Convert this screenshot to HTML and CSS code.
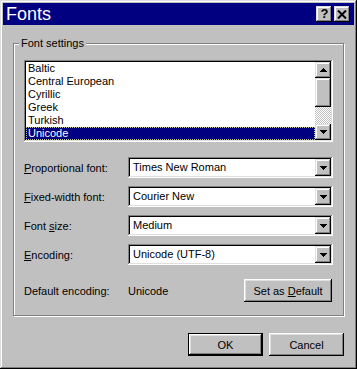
FILE: index.html
```html
<html>
  <head>
    <link rel="stylesheet" href="styles.css">
    <title>Fonts</title>
  </head>
  <body>
    <div class="window">
      <div class="titlebar">
        <span class="title">Fonts</span>
        <div class="caption-btns">
          <span class="caption-btn help">?</span>
          <span class="caption-btn">
            <svg width="10" height="9" viewBox="0 0 10 9">
              <path d="M1 0.5 L9 8.5 M9 0.5 L1 8.5" stroke="#000" stroke-width="2"/>
            </svg>
          </span>
        </div>
      </div>
      <div class="body">
        <fieldset class="group">
          <legend>Font settings</legend>
          <div class="listbox">
            <ul class="list">
              <li>Baltic</li>
              <li>Central European</li>
              <li>Cyrillic</li>
              <li>Greek</li>
              <li>Turkish</li>
              <li class="selected">Unicode</li>
            </ul>
            <div class="scrollbar">
              <span class="sb-btn">
                <svg width="7" height="4" viewBox="0 0 7 4" shape-rendering="crispEdges">
                  <rect x="3" y="0" width="1" height="1"/><rect x="2" y="1" width="3" height="1"/>
                  <rect x="1" y="2" width="5" height="1"/><rect x="0" y="3" width="7" height="1"/>
                </svg>
              </span>
              <span class="sb-thumb"></span>
              <span class="sb-track"></span>
              <span class="sb-btn">
                <svg width="7" height="4" viewBox="0 0 7 4" shape-rendering="crispEdges">
                  <rect x="0" y="0" width="7" height="1"/><rect x="1" y="1" width="5" height="1"/>
                  <rect x="2" y="2" width="3" height="1"/><rect x="3" y="3" width="1" height="1"/>
                </svg>
              </span>
            </div>
          </div>

          <div class="rows">
            <label><u>P</u>roportional font:</label>
            <div class="combo"><span class="combo-value">Times New Roman</span><span class="combo-btn"><svg width="7" height="4" viewBox="0 0 7 4" shape-rendering="crispEdges"><rect x="0" y="0" width="7" height="1"/><rect x="1" y="1" width="5" height="1"/><rect x="2" y="2" width="3" height="1"/><rect x="3" y="3" width="1" height="1"/></svg></span></div>

            <label><u>F</u>ixed-width font:</label>
            <div class="combo"><span class="combo-value">Courier New</span><span class="combo-btn"><svg width="7" height="4" viewBox="0 0 7 4" shape-rendering="crispEdges"><rect x="0" y="0" width="7" height="1"/><rect x="1" y="1" width="5" height="1"/><rect x="2" y="2" width="3" height="1"/><rect x="3" y="3" width="1" height="1"/></svg></span></div>

            <label>Font <u>s</u>ize:</label>
            <div class="combo"><span class="combo-value">Medium</span><span class="combo-btn"><svg width="7" height="4" viewBox="0 0 7 4" shape-rendering="crispEdges"><rect x="0" y="0" width="7" height="1"/><rect x="1" y="1" width="5" height="1"/><rect x="2" y="2" width="3" height="1"/><rect x="3" y="3" width="1" height="1"/></svg></span></div>

            <label><u>E</u>ncoding:</label>
            <div class="combo"><span class="combo-value">Unicode (UTF-8)</span><span class="combo-btn"><svg width="7" height="4" viewBox="0 0 7 4" shape-rendering="crispEdges"><rect x="0" y="0" width="7" height="1"/><rect x="1" y="1" width="5" height="1"/><rect x="2" y="2" width="3" height="1"/><rect x="3" y="3" width="1" height="1"/></svg></span></div>
          </div>

          <div class="default-row">
            <span class="default-label">Default encoding:</span>
            <span>Unicode</span>
            <button class="btn btn-wide">Set as <u>D</u>efault</button>
          </div>
        </fieldset>

        <div class="actions">
          <button class="btn btn-default">OK</button>
          <button class="btn">Cancel</button>
        </div>
      </div>
    </div>
  </body>
</html>
```

FILE: styles.css
```css
* {
  box-sizing: border-box;
}

body {
  margin: 0;
  background: #c0c0c0;
  font-family: "Liberation Sans", Arial, sans-serif;
  font-size: 11px;
  color: #000;
}

.window {
  width: 357px;
  height: 369px;
  padding: 3px;
  background: #c0c0c0;
  box-shadow: inset -1px -1px #000, inset 1px 1px #dfdfdf,
              inset -2px -2px #808080, inset 2px 2px #fff;
}

/* title bar */
.titlebar {
  height: 22px;
  background: #000080;
  color: #fff;
  display: flex;
  align-items: center;
  padding: 0 4px 0 3px;
}
.title {
  flex: 1;
  font-size: 18px;
  line-height: 22px;
}
.caption-btns {
  display: flex;
  gap: 2px;
}
.caption-btn {
  width: 16px;
  height: 16px;
  display: flex;
  justify-content: center;
  align-items: center;
  background: #c0c0c0;
  color: #000;
  box-shadow: inset -1px -1px #000, inset 1px 1px #dfdfdf,
              inset -2px -2px #808080, inset 2px 2px #fff;
}
.caption-btn.help {
  font-size: 13px;
  font-weight: bold;
  line-height: 16px;
  padding-left: 1px;
}

/* group box */
.body {
  padding: 0 10px;
}
.group {
  margin: 12px 0 0 0;
  padding: 10px 10px 13px 10px;
  border: 1px solid #808080;
  box-shadow: inset 1px 1px #fff, 1px 1px #fff;
}
.group legend {
  margin-left: -5px;
  padding: 0 2px;
  line-height: 13px;
  background: #c0c0c0;
}

/* list box */
.listbox {
  display: flex;
  height: 82px;
  padding: 2px;
  background: #fff;
  box-shadow: inset -1px -1px #fff, inset 1px 1px #808080,
              inset -2px -2px #dfdfdf, inset 2px 2px #000;
}
.list {
  flex: 1;
  margin: 0;
  padding: 0;
  list-style: none;
}
.list li {
  height: 13px;
  line-height: 13px;
  padding-left: 2px;
}
.list li.selected {
  background: #000080;
  color: #fff;
  outline: 1px dotted #c0c0a0;
  outline-offset: -1px;
}
.scrollbar {
  width: 16px;
  display: flex;
  flex-direction: column;
}
.sb-btn, .sb-thumb, .combo-btn {
  background: #c0c0c0;
  box-shadow: inset -1px -1px #000, inset 1px 1px #dfdfdf,
              inset -2px -2px #808080, inset 2px 2px #fff;
}
.sb-btn {
  height: 16px;
  display: flex;
  justify-content: center;
  align-items: center;
}
.sb-thumb {
  height: 29px;
}
.sb-track {
  flex: 1;
  background: repeating-conic-gradient(#fff 0 25%, #c0c0c0 0 50%) 0 0 / 2px 2px;
}

/* label rows */
.rows {
  display: grid;
  grid-template-columns: 104px 1fr;
  row-gap: 8px;
  align-items: center;
  margin-top: 15px;
}
.combo {
  display: flex;
  height: 21px;
  padding: 2px;
  background: #fff;
  box-shadow: inset -1px -1px #fff, inset 1px 1px #808080,
              inset -2px -2px #dfdfdf, inset 2px 2px #000;
}
.combo-value {
  flex: 1;
  padding-left: 3px;
  line-height: 17px;
}
.combo-btn {
  width: 16px;
  display: flex;
  justify-content: center;
  align-items: center;
  padding-top: 1px;
}

.default-row {
  display: flex;
  align-items: center;
  margin-top: 14px;
}
.default-label {
  width: 104px;
}

/* buttons */
.btn {
  width: 75px;
  height: 23px;
  padding: 0;
  border: 0;
  background: #c0c0c0;
  font: inherit;
  color: #000;
  box-shadow: inset -1px -1px #000, inset 1px 1px #fff,
              inset -2px -2px #808080, inset 2px 2px #dfdfdf;
}
.btn-wide {
  width: 88px;
  margin-left: auto;
  margin-right: 1px;
}
.btn-default {
  box-shadow: inset 0 0 0 1px #000, inset -2px -2px #000, inset 2px 2px #fff,
              inset -3px -3px #808080, inset 3px 3px #dfdfdf;
}
.actions {
  display: flex;
  justify-content: flex-end;
  gap: 6px;
  margin-top: 17px;
}
```
